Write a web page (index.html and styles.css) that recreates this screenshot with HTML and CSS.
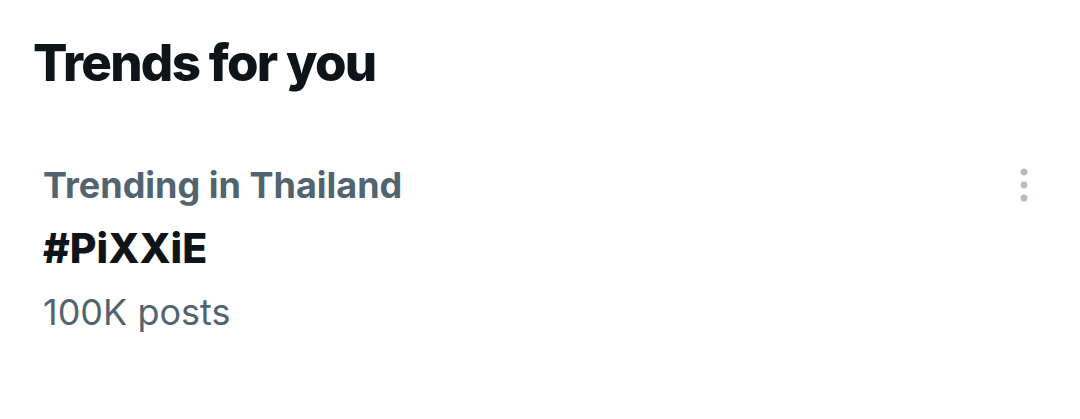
FILE: index.html
```html
<!DOCTYPE html>
<html lang="en">
<head>
    <meta charset="UTF-8">
    <title>Trends for you</title>
    <link rel="stylesheet" href="styles.css">
</head>
<body>
    <section class="trends">
        <h2 class="trends-title">Trends for you</h2>

        <div class="trend">
            <div class="trend-body">
                <div class="trend-context">Trending in Thailand</div>
                <div class="trend-name">#PiXXiE</div>
                <div class="trend-count">100K posts</div>
            </div>
            <button class="trend-more" aria-label="More">
                <svg width="12" height="34" viewBox="0 0 12 34">
                    <circle cx="6" cy="4" r="3.4"/>
                    <circle cx="6" cy="17" r="3.4"/>
                    <circle cx="6" cy="30" r="3.4"/>
                </svg>
            </button>
        </div>
    </section>
</body>
</html>
```
FILE: styles.css
```css
body { margin: 0; background: #fff; font-family: Inter, "Noto Sans", sans-serif; color: #0f1419; }
.trends { padding: 33px 50px 0 33px; }
.trends-title { margin: 0; font-size: 51px; font-weight: 800; letter-spacing: -1.7px; line-height: 60px; }
.trend { display: flex; justify-content: space-between; align-items: flex-start; padding: 68px 0 0 10px; }
.trend-context { font-size: 36px; font-weight: 700; color: #536471; line-height: 48px; }
.trend-name { margin-top: 14px; font-size: 41px; font-weight: 800; line-height: 50px; }
.trend-count { margin-top: 15px; font-size: 36px; color: #536471; line-height: 48px; }
.trend-more { border: 0; background: none; padding: 0; margin-top: 7px; fill: #b3bcc3; }
.trend-more svg { display: block; }
```
